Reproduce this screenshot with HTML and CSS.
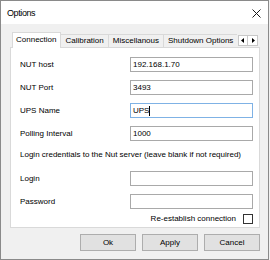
FILE: index.html
```html
<!DOCTYPE html>
<html>
<head>
<meta charset="utf-8">
<link rel="stylesheet" href="styles.css">
</head>
<body>
<div class="window">
  <div class="titlebar">
    <span class="title">Options</span>
    <svg class="close" width="9" height="9" viewBox="0 0 9 9"><path d="M0.5 0.5 L8.5 8.5 M8.5 0.5 L0.5 8.5" stroke="#1a1a1a" stroke-width="1" fill="none"/></svg>
  </div>
  <div class="client">
    <div class="tabstrip">
      <div class="tabs">
        <div class="tab active">Connection</div>
        <div class="tab">Calibration</div>
        <div class="tab">Miscellanous</div>
        <div class="tab">Shutdown Options</div>
      </div>
      <div class="scroller">
        <span class="arrow"><svg width="4" height="5" viewBox="0 0 4 5"><path d="M3 0 L0 2.5 L3 5 Z" fill="#000"/></svg></span>
        <span class="arrow"><svg width="4" height="5" viewBox="0 0 4 5"><path d="M1 0 L4 2.5 L1 5 Z" fill="#000"/></svg></span>
      </div>
    </div>
    <div class="panel">
      <div class="form">
        <span class="label">NUT host</span><div class="field">192.168.1.70</div>
        <span class="label">NUT Port</span><div class="field">3493</div>
        <span class="label">UPS Name</span><div class="field focus">UPS<span class="caret"></span></div>
        <span class="label">Polling Interval</span><div class="field">1000</div>
      </div>
      <div class="note">Login credentials to the Nut server (leave blank if not required)</div>
      <div class="form login">
        <span class="label">Login</span><div class="field"></div>
        <span class="label">Password</span><div class="field"></div>
      </div>
      <div class="reconnect">
        <span>Re-establish connection</span>
        <span class="checkbox"></span>
      </div>
    </div>
    <div class="buttons">
      <div class="btn">Ok</div>
      <div class="btn">Apply</div>
      <div class="btn">Cancel</div>
    </div>
  </div>
</div>
</body>
</html>
```

FILE: styles.css
```css
* { box-sizing: border-box; }
html, body { margin: 0; padding: 0; background: #f0f0f0; }
body {
  font-family: "Liberation Sans", Arial, sans-serif;
  font-size: 8px;
  color: #000;
}
.window {
  width: 269px;
  height: 260px;
  border: 1px solid #8a8a8a;
  background: #f0f0f0;
  display: flex;
  flex-direction: column;
}
.titlebar {
  height: 23px;
  background: #fff;
  display: flex;
  align-items: center;
  justify-content: space-between;
  padding: 0 7px 0 6px;
}
.title {
  font-size: 9px;
  letter-spacing: -0.4px;
  color: #000;
}
.close { display: block; margin-top: 1px; }
.client {
  flex: 1;
  padding: 8px 8px 0 9px;
  display: flex;
  flex-direction: column;
}
.tabstrip {
  display: flex;
  height: 16px;
  margin-bottom: -1px;
  padding-left: 2px;
  position: relative;
  z-index: 1;
}
.tabs {
  display: flex;
  flex: 1;
  overflow: hidden;
  align-items: flex-start;
}
.tab {
  flex: none;
  height: 13px;
  margin-top: 2px;
  line-height: 12px;
  padding: 0 4px;
  border: 1px solid #d9d9d9;
  border-bottom: none;
  border-left: none;
  background: #f0f0f0;
  white-space: nowrap;
}
.tab.active {
  height: 16px;
  margin-top: 0;
  line-height: 14px;
  background: #fff;
  border-left: 1px solid #d9d9d9;
  padding: 0 4px 0 3px;
}
.scroller {
  display: flex;
  margin-top: 3px;
  margin-left: 1px;
  align-self: flex-start;
  margin-right: 2px;
}
.arrow {
  width: 10px;
  height: 11px;
  border: 1px solid #c8c8c8;
  background: #fff;
  display: flex;
  align-items: center;
  justify-content: center;
}
.arrow + .arrow { border-left: none; }
.arrow svg { display: block; }
.panel {
  width: 250px;
  background: #fff;
  border: 1px solid #d9d9d9;
  padding: 9px 6px 3px 9px;
  display: flex;
  flex-direction: column;
}
.form {
  display: grid;
  grid-template-columns: 110px 1fr;
  grid-auto-rows: 15px;
  row-gap: 8px;
  align-items: center;
}
.form.login { margin-top: 10px; }
.label { white-space: nowrap; }
.field {
  height: 15px;
  border: 1px solid #a9a9a9;
  background: #fff;
  padding-left: 2px;
  line-height: 13px;
  display: flex;
  align-items: center;
}
.field.focus { border-color: #7fb2e5; }
.caret {
  display: inline-block;
  width: 1px;
  height: 10px;
  background: #000;
  margin-left: 0px;
}
.note {
  margin-top: 8px;
  height: 12px;
  line-height: 12px;
  white-space: nowrap;
}
.reconnect {
  margin-top: 4px;
  height: 11px;
  display: flex;
  justify-content: flex-end;
  align-items: center;
  gap: 7px;
}
.checkbox {
  width: 10px;
  height: 10px;
  border: 1px solid #333;
  background: #fff;
}
.buttons {
  margin-top: 6px;
  display: flex;
  justify-content: flex-end;
  gap: 6px;
}
.btn {
  width: 56px;
  height: 17px;
  border: 1px solid #adadad;
  background: #e1e1e1;
  display: flex;
  align-items: center;
  justify-content: center;
}
```
